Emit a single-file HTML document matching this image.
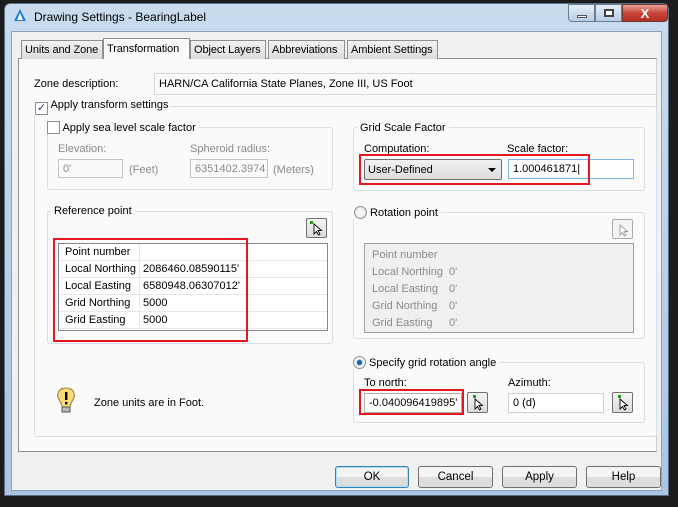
<!DOCTYPE html><html><head><style>
*{box-sizing:border-box;margin:0;padding:0}
body{width:678px;height:507px;background:#1c1c1c;position:relative;overflow:hidden;font-family:"Liberation Sans",sans-serif;font-size:11px;color:#000}
.a{position:absolute;white-space:nowrap}
.frame{left:4px;top:3px;width:665px;height:493px;background:linear-gradient(#c9dcee,#aac6e2);border:1px solid #5a6f86;border-radius:6px 6px 0 0}
.client{left:11px;top:31px;width:651px;height:460px;background:#f0f0f0;border:1px solid #8da2b8}
.tab{top:40px;height:19px;background:linear-gradient(#f2f2f2,#dcdcdc);border:1px solid #8e8f8f;border-bottom:none;padding:3px 0 0 3px;font-size:11px;letter-spacing:-0.1px}
.page{left:18px;top:58px;width:639px;height:394px;background:#fafafa;border:1px solid #8e8f8f;border-right-color:#d0d0d0}
.grp{border:1px solid #d5dfe5;border-radius:3px}
.lbl{background:#fafafa;padding:0 3px}
.box{background:#fff;border:1px solid #abadb3;padding:3px 4px}
.dis{color:#8a8a8a}
.dbox{background:#fafafa;border:1px solid #c3c3c3;color:#8a8a8a;padding:3px 4px}
.red{border:2px solid #e4171f}
.pick{background:linear-gradient(#f5f5f5,#dcdcdc);border:1px solid #707070;border-radius:2px}
.btn{top:466px;height:22px;background:linear-gradient(#f4f4f4 50%,#dddddd 50%);border:1px solid #707070;border-radius:3px;text-align:center;padding-top:4px;font-size:11.5px}
.row{position:absolute;left:0;width:100%;height:17px;border-bottom:1px solid #e8e8e8;padding:2px 0 0 6px}
.row span{position:absolute;left:84px;top:2px}
</style></head><body>
<div class="a frame"></div>
<svg class="a" style="left:13px;top:8px" width="16" height="16"><path d="M7 1 L1 13 L13 13 Z" fill="#1b7fd4"/><path d="M7 5 L4 12 L10 12Z" fill="#fff"/></svg>
<div class="a" style="left:34px;top:10px;font-size:12px">Drawing Settings - BearingLabel</div>
<div class="a" style="left:568px;top:4px;width:27px;height:18px;border:1px solid #6b7d93;border-radius:0 0 0 4px;background:linear-gradient(#e4eef8,#b8cde3)"><div class="a" style="left:8px;top:10px;width:10px;height:3px;background:#fff;border:1px solid #555"></div></div>
<div class="a" style="left:595px;top:4px;width:27px;height:18px;border:1px solid #6b7d93;background:linear-gradient(#e4eef8,#b8cde3)"><div class="a" style="left:8px;top:4px;width:10px;height:8px;border:2px solid #444;background:#fff"></div></div>
<div class="a" style="left:622px;top:4px;width:46px;height:18px;border:1px solid #6b3a30;border-radius:0 0 4px 0;background:linear-gradient(#e7a294,#c7473a 50%,#b52e1f);color:#fff;font-weight:bold;text-align:center;font-size:13px;line-height:17px">X</div>
<div class="a client"></div>
<div class="a page"></div>
<div class="a tab" style="left:21px;width:82px">Units and Zone</div>
<div class="a tab" style="left:103px;top:38px;height:21px;width:87px;background:#fafafa;padding-top:4px">Transformation</div>
<div class="a tab" style="left:190px;width:76px">Object Layers</div>
<div class="a tab" style="left:268px;width:77px">Abbreviations</div>
<div class="a tab" style="left:347px;width:91px">Ambient Settings</div>

<div class="a" style="left:34px;top:78px">Zone description:</div>
<div class="a" style="left:154px;top:73px;width:503px;height:22px;border:1px solid #d8d8d8;background:#fafafa;padding:4px 4px">HARN/CA California State Planes, Zone III, US Foot</div>

<div class="a grp" style="left:34px;top:106px;width:623px;height:331px"></div>
<div class="a lbl" style="left:33px;top:99px;padding:0 2px"><span style="display:inline-block;width:13px;height:13px;border:1px solid #8e8f8f;background:#fff;vertical-align:-3px;font-size:11px;line-height:11px;color:#2a3c8c;text-align:center">✓</span> Apply transform settings</div>

<div class="a grp" style="left:47px;top:127px;width:286px;height:63px"></div>
<div class="a lbl" style="left:44px;top:121px"><span style="display:inline-block;width:13px;height:13px;border:1px solid #8e8f8f;background:#fff;vertical-align:-3px"></span> Apply sea level scale factor</div>
<div class="a dis" style="left:58px;top:143px">Elevation:</div>
<div class="a dbox" style="left:58px;top:159px;width:65px;height:19px">0'</div>
<div class="a dis" style="left:129px;top:164px">(Feet)</div>
<div class="a dis" style="left:190px;top:143px">Spheroid radius:</div>
<div class="a dbox" style="left:190px;top:159px;width:78px;height:19px">6351402.3974</div>
<div class="a dis" style="left:273px;top:164px">(Meters)</div>

<div class="a grp" style="left:353px;top:127px;width:292px;height:64px"></div>
<div class="a lbl" style="left:357px;top:122px">Grid Scale Factor</div>
<div class="a" style="left:364px;top:143px">Computation:</div>
<div class="a" style="left:364px;top:159px;width:138px;height:21px;border:1px solid #707070;border-radius:2px;background:linear-gradient(#f2f2f2,#dcdcdc);padding:4px 3px">User-Defined<span class="a" style="right:5px;top:8px;border:4px solid transparent;border-top:4px solid #000;border-bottom:none"></span></div>
<div class="a" style="left:507px;top:143px">Scale factor:</div>
<div class="a box" style="left:508px;top:159px;width:126px;height:20px;border-color:#7eb4ea">1.000461871|</div>
<div class="a red" style="left:359px;top:154px;width:231px;height:31px"></div>

<div class="a grp" style="left:47px;top:211px;width:286px;height:133px"></div>
<div class="a lbl" style="left:51px;top:205px">Reference point</div>
<div class="a pick" style="left:306px;top:218px;width:21px;height:20px"><div class="a" style="left:3px;top:2px;width:3px;height:3px;background:#1ea01e"></div><svg class="a" style="left:6px;top:4px" width="10" height="13"><path d="M1 1 L1 11 L3.5 8.5 L5.5 12 L7 11 L5 7.5 L8.5 7.5 Z" fill="#fff" stroke="#000" stroke-width="0.9"/></svg></div>
<div class="a" style="left:58px;top:243px;width:270px;height:88px;background:#fff;border:1px solid #828790">
<div class="row" style="top:0">Point number<span></span></div>
<div class="row" style="top:17px">Local Northing<span>2086460.08590115'</span></div>
<div class="row" style="top:34px">Local Easting<span>6580948.06307012'</span></div>
<div class="row" style="top:51px">Grid Northing<span>5000</span></div>
<div class="row" style="top:68px">Grid Easting<span>5000</span></div>
<div class="a" style="left:80px;top:0;width:1px;height:86px;background:#e8e8e8"></div>
</div>
<div class="a red" style="left:53px;top:238px;width:195px;height:104px"></div>

<div class="a grp" style="left:353px;top:212px;width:292px;height:127px"></div>
<div class="a lbl" style="left:351px;top:206px"><span style="display:inline-block;width:13px;height:13px;border-radius:50%;border:1px solid #8e8f8f;background:radial-gradient(#fff,#ddd);vertical-align:-3px"></span> Rotation point</div>
<div class="a" style="left:612px;top:219px;width:21px;height:20px;border:1px solid #aaa;border-radius:2px;background:#f4f4f4"><svg class="a" style="left:6px;top:4px" width="10" height="13"><path d="M1 1 L1 11 L3.5 8.5 L5.5 12 L7 11 L5 7.5 L8.5 7.5 Z" fill="#fff" stroke="#999" stroke-width="0.9"/></svg></div>
<div class="a dis" style="left:364px;top:243px;width:270px;height:90px;background:#f0f0f0;border:1px solid #a0a0a0;line-height:17px;padding:3px 7px">Point number<br>Local Northing<br>Local Easting<br>Grid Northing<br>Grid Easting
<div class="a" style="left:84px;top:20px">0'<br>0'<br>0'<br>0'</div></div>

<div class="a grp" style="left:353px;top:362px;width:292px;height:61px"></div>
<div class="a lbl" style="left:350px;top:356px"><span style="display:inline-block;width:13px;height:13px;border-radius:50%;border:1px solid #8e8f8f;background:radial-gradient(#1b5fa8 25%,#6aaee0 35%,#fff 45%,#ddd);vertical-align:-3px"></span> Specify grid rotation angle</div>
<div class="a" style="left:364px;top:377px">To north:</div>
<div class="a box" style="left:364px;top:393px;width:98px;height:20px;overflow:hidden;white-space:nowrap">-0.040096419895'</div>
<div class="a red" style="left:359px;top:389px;width:105px;height:26px"></div>
<div class="a pick" style="left:467px;top:392px;width:21px;height:21px"><div class="a" style="left:5px;top:2px;width:3px;height:3px;background:#1ea01e"></div><svg class="a" style="left:6px;top:5px" width="10" height="13"><path d="M1 1 L1 11 L3.5 8.5 L5.5 12 L7 11 L5 7.5 L8.5 7.5 Z" fill="#fff" stroke="#000" stroke-width="0.9"/></svg></div>
<div class="a" style="left:508px;top:377px">Azimuth:</div>
<div class="a box" style="left:508px;top:393px;width:96px;height:20px;border-color:#d0d0d0">0 (d)</div>
<div class="a pick" style="left:612px;top:392px;width:21px;height:21px"><div class="a" style="left:5px;top:2px;width:3px;height:3px;background:#1ea01e"></div><svg class="a" style="left:6px;top:5px" width="10" height="13"><path d="M1 1 L1 11 L3.5 8.5 L5.5 12 L7 11 L5 7.5 L8.5 7.5 Z" fill="#fff" stroke="#000" stroke-width="0.9"/></svg></div>

<svg class="a" style="left:55px;top:386px" width="22" height="30"><path d="M11 2 C4 2 2 7 3 11 C4 15 7 17 7 21 L15 21 C15 17 18 15 19 11 C20 7 18 2 11 2Z" fill="#fbd97a" stroke="#9a7a2a"/><rect x="7" y="21" width="8" height="5" fill="#bbb" stroke="#555"/><rect x="10" y="6" width="2.4" height="8" fill="#000"/><rect x="10" y="16" width="2.4" height="2.4" fill="#000"/></svg>
<div class="a" style="left:94px;top:397px">Zone units are in Foot.</div>

<div class="a btn" style="left:335px;width:74px;border-color:#3c7fb1;box-shadow:inset 0 0 0 1px #a7e0f8">OK</div>
<div class="a btn" style="left:418px;width:75px">Cancel</div>
<div class="a btn" style="left:502px;width:75px">Apply</div>
<div class="a btn" style="left:586px;width:75px">Help</div>
</body></html>
